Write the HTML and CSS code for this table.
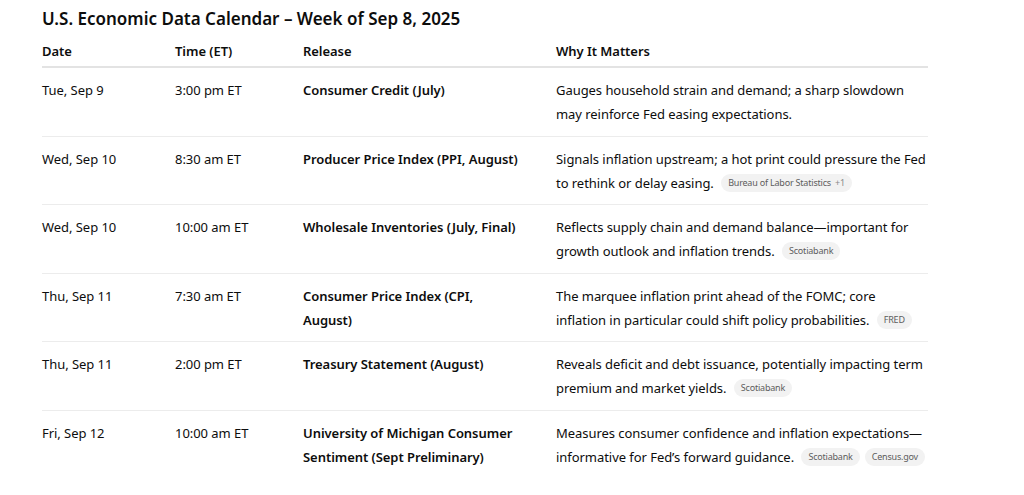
FILE: index.html
```html
<!DOCTYPE html>
<html>
<head>
<meta charset="utf-8">
<link rel="stylesheet" href="styles.css">
</head>
<body>
<div class="wrap">
  <h2 class="title">U.S. Economic Data Calendar – Week of Sep 8, 2025</h2>
  <table class="cal">
    <colgroup>
      <col class="c-date"><col class="c-time"><col class="c-rel"><col class="c-why">
    </colgroup>
    <thead>
      <tr><th>Date</th><th>Time (ET)</th><th>Release</th><th>Why It Matters</th></tr>
    </thead>
    <tbody>
      <tr>
        <td>Tue, Sep 9</td><td>3:00 pm ET</td><td class="rel">Consumer Credit (July)</td>
        <td>Gauges household strain and demand; a sharp slowdown may reinforce Fed easing expectations.</td>
      </tr>
      <tr>
        <td>Wed, Sep 10</td><td>8:30 am ET</td><td class="rel">Producer Price Index (PPI, August)</td>
        <td>Signals inflation upstream; a hot print could pressure the Fed to rethink or delay easing. <span class="pill">Bureau of Labor Statistics <span class="plus">+1</span></span></td>
      </tr>
      <tr>
        <td>Wed, Sep 10</td><td>10:00 am ET</td><td class="rel">Wholesale Inventories (July, Final)</td>
        <td>Reflects supply chain and demand balance—important for growth outlook and inflation trends. <span class="pill">Scotiabank</span></td>
      </tr>
      <tr>
        <td>Thu, Sep 11</td><td>7:30 am ET</td><td class="rel">Consumer Price Index (CPI, August)</td>
        <td>The marquee inflation print ahead of the FOMC; core inflation in particular could shift policy probabilities. <span class="pill">FRED</span></td>
      </tr>
      <tr>
        <td>Thu, Sep 11</td><td>2:00 pm ET</td><td class="rel">Treasury Statement (August)</td>
        <td>Reveals deficit and debt issuance, potentially impacting term premium and market yields. <span class="pill">Scotiabank</span></td>
      </tr>
      <tr>
        <td>Fri, Sep 12</td><td>10:00 am ET</td><td class="rel">University of Michigan Consumer Sentiment (Sept Preliminary)</td>
        <td>Measures consumer confidence and inflation expectations—informative for Fed’s forward guidance. <span class="pill">Scotiabank</span><span class="pill">Census.gov</span></td>
      </tr>
    </tbody>
  </table>
</div>
</body>
</html>
```
FILE: styles.css
```css
html, body {
  margin: 0;
  padding: 0;
  background: #ffffff;
}
body {
  font-family: "Noto Sans", "Open Sans", sans-serif;
  color: #0d0d0d;
  font-size: 13px;
  letter-spacing: -0.05px;
}
.wrap {
  padding: 6px 0 0 42px;
  width: 886px;
}
.title {
  margin: 0;
  font-size: 17px;
  font-weight: 600;
  line-height: 26px;
  letter-spacing: 0;
}
.cal {
  border-collapse: collapse;
  width: 886px;
  table-layout: fixed;
  margin-top: 2px;
}
.c-date { width: 133px; }
.c-time { width: 128px; }
.c-rel { width: 253px; }
.c-why { width: 372px; }
th {
  text-align: left;
  font-weight: 600;
  line-height: 24px;
  padding: 5px 32px 3px 0;
  border-bottom: 2px solid #e3e3e3;
}
td {
  vertical-align: top;
  line-height: 24px;
  padding: 10px 32px 9.6px 0;
  border-bottom: 1px solid #ececec;
}
th:last-child, td:last-child { padding-right: 0; }
tbody tr:last-child td { border-bottom: none; }
.rel { font-weight: 600; }
.pill {
  display: inline-block;
  background: #f2f2f2;
  color: #5d5d5d;
  font-size: 9px;
  letter-spacing: -0.2px;
  line-height: 18px;
  padding: 0 7px;
  border-radius: 9px;
  vertical-align: 2px;
  margin-left: 4px;
}
.pill + .pill { margin-left: 5px; }
.plus { color: #8a8a8a; margin-left: 2px; }
```
